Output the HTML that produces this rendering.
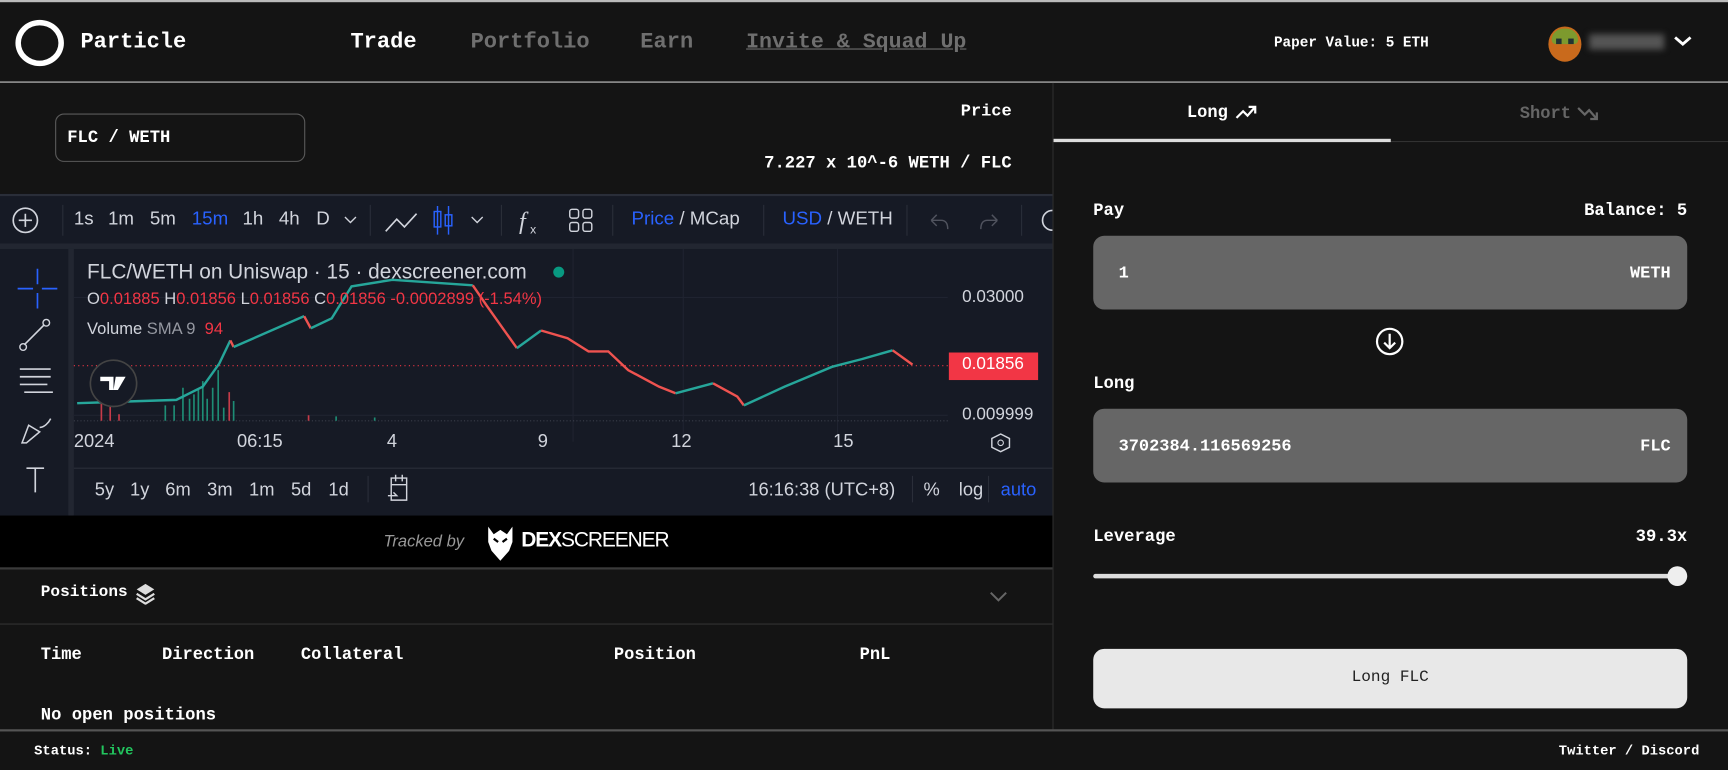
<!DOCTYPE html>
<html><head><meta charset="utf-8">
<style>
*{margin:0;padding:0;box-sizing:border-box}
html,body{width:1728px;height:770px;overflow:hidden;background:#141414}
#w{position:absolute;left:0;top:0;width:1568px;height:699px;transform:scale(1.10204,1.1016);transform-origin:0 0;background:#141414;color:#fff;font-family:"Liberation Mono",monospace}
.a{position:absolute;white-space:nowrap}
.m{font-family:"Liberation Mono",monospace;font-weight:bold}
.s{font-family:"Liberation Sans",sans-serif}
.tb{color:#d1d4dc;font-size:17px;top:189px}
.bb{color:#d1d4dc;font-size:16.6px;top:435px}
</style></head><body><div id="w">
<div class="a" style="left:0;top:0;width:1568px;height:2px;background:#bbb"></div>
<!-- header -->
<div class="a" style="left:14px;top:18px;width:44px;height:42px;border:5px solid #fff;border-radius:50%"></div>
<div class="a m" style="left:73px;top:27px;font-size:20px">Particle</div>
<div class="a m" style="left:318px;top:27px;font-size:20px;color:#fff">Trade</div>
<div class="a m" style="left:427px;top:27px;font-size:20px;color:#6f6f6f">Portfolio</div>
<div class="a m" style="left:581px;top:27px;font-size:20px;color:#6f6f6f">Earn</div>
<div class="a m" style="left:677px;top:27px;font-size:19.6px;color:#6f6f6f;text-decoration:underline">Invite &amp; Squad Up</div>
<div class="a m" style="left:1156px;top:31px;font-size:13px">Paper Value: 5 ETH</div>
<div class="a" style="left:1405px;top:24px;width:30px;height:32px;border-radius:50%;background:#c96a1c;overflow:hidden"><div style="position:absolute;left:3px;top:2px;width:24px;height:14px;background:#7d9a2e;border-radius:12px 12px 4px 4px"></div><div style="position:absolute;left:7px;top:11px;width:5px;height:5px;background:#233"></div><div style="position:absolute;left:18px;top:11px;width:5px;height:5px;background:#233"></div></div>
<div class="a" style="left:1442px;top:31px;width:68px;height:14px;background:#555;filter:blur(3px)"></div>
<svg class="a" style="left:1518px;top:31px" width="18" height="12"><path d="M2 3l7 6 7-6" stroke="#fff" stroke-width="2.6" fill="none"/></svg>
<div class="a" style="left:0;top:74px;width:1568px;height:1px;background:#ccc"></div>
<div class="a" style="left:955px;top:75px;width:1px;height:588px;background:#2e2e2e"></div>
<!-- pair -->
<div class="a" style="left:50px;top:103px;width:227px;height:44px;border:1.5px solid #5a5a5a;border-radius:8px"></div>
<div class="a m" style="left:61px;top:116px;font-size:15.6px">FLC / WETH</div>
<div class="a m" style="right:650px;top:92px;font-size:15.4px">Price</div>
<div class="a m" style="right:650px;top:139px;font-size:15.6px">7.227 x 10^-6 WETH / FLC</div>
<!-- chart -->
<div class="a" style="left:0;top:176px;width:955px;height:292px;background:#161a25;overflow:hidden">
 <div class="a" style="left:0;top:0;width:955px;height:2px;background:#2a2e39"></div>
 <div class="a" style="left:0;top:45px;width:955px;height:5px;background:#222631"></div>
 <div class="a" style="left:62px;top:50px;width:5px;height:242px;background:#222631"></div>
</div>
<svg class="a" style="left:0;top:176px" width="955" height="292">
 <circle cx="23" cy="24" r="11" stroke="#d1d4dc" stroke-width="1.5" fill="none"/><path d="M17 24h12M23 18v12" stroke="#d1d4dc" stroke-width="1.5"/>
 <path d="M57 10v28M336 10v28M455 10v28M556 10v28M693 10v28M823 10v28M927 10v28" stroke="#2a2e39"/>
 <path d="M350 34l10-11 7 7 11-12" stroke="#d1d4dc" stroke-width="1.5" fill="none"/>
 <path d="M397 11v26M407 11v26" stroke="#2962ff" stroke-width="1.3"/><rect x="394" y="16" width="6" height="14" fill="none" stroke="#2962ff" stroke-width="1.3"/><rect x="404" y="19" width="6" height="10" fill="none" stroke="#2962ff" stroke-width="1.3"/>
 <path d="M313 21l5 5 5-5M428 21l5 5 5-5" stroke="#d1d4dc" stroke-width="1.2" fill="none"/>
 <text x="471" y="32" fill="#d1d4dc" font-size="22" font-family="Liberation Serif" font-style="italic">f</text><text x="481" y="36" fill="#d1d4dc" font-size="11" font-family="Liberation Sans">x</text>
 <g fill="none" stroke="#d1d4dc" stroke-width="1.3"><rect x="517" y="14" width="8" height="8" rx="2"/><rect x="529" y="14" width="8" height="8" rx="2"/><rect x="517" y="26" width="8" height="8" rx="2"/><rect x="529" y="26" width="8" height="8" rx="2"/></g>
 <path d="M845 24l5-5M845 24l5 5M845 24h9c4 0 6 3 6 8M905 24l-5-5M905 24l-5 5M905 24h-9c-4 0-6 3-6 8" stroke="#50535e" stroke-width="1.3" fill="none"/>
 <circle cx="955" cy="24" r="9" stroke="#d1d4dc" stroke-width="1.5" fill="none"/>
 <path d="M34 68v14M34 90v14M16 86h14M38 86h14" stroke="#2962ff" stroke-width="1.5"/>
 <path d="M22 137l18-18" stroke="#d1d4dc" stroke-width="1.5"/><circle cx="21" cy="139" r="3" fill="none" stroke="#d1d4dc" stroke-width="1.3"/><circle cx="42" cy="117" r="3" fill="none" stroke="#d1d4dc" stroke-width="1.3"/>
 <path d="M18 159h28M18 166h28M18 173h25M22 180h26" stroke="#d1d4dc" stroke-width="1.5"/>
 <path d="M20 226l6-16 10 6-12 10zM36 212c4 0 8-4 10-8" stroke="#d1d4dc" stroke-width="1.4" fill="none"/>
 <path d="M24 249h16M32 249v22" stroke="#d1d4dc" stroke-width="1.5"/>
 <path d="M67 94H860M67 201H860M620 50v175M760 50v175M520 50v175" stroke="#1f2330" stroke-width="1"/>
 <path d="M67 156H860" stroke="#f23645" stroke-width="1" stroke-dasharray="1 3"/>
 <path d="M67 206H860" stroke="#3a3e4a" stroke-dasharray="1 2"/>
 <g stroke="#1e8d75" stroke-width="1.5"><path d="M150 206v-14M158 206v-14M166 206v-30M172 206v-20M176 206v-24M180 206v-28M184 206v-36M188 206v-20M193 206v-30M198 206v-46M203 206v-12M212 206v-18M305 206v-4M340 206v-3"/></g>
 <g stroke="#c73b49" stroke-width="1.5"><path d="M92 206v-18M100 206v-14M208 206v-26M108 206v-6M280 206v-5"/></g>
 <polyline fill="none" stroke="#26a69a" stroke-width="2.2" points="70,190 160,187 184,175 199,154 209,133"/>
 <polyline fill="none" stroke="#ef5350" stroke-width="2.2" points="209,133 212,139"/>
 <polyline fill="none" stroke="#26a69a" stroke-width="2.2" points="212,139 276,111"/>
 <polyline fill="none" stroke="#ef5350" stroke-width="2.2" points="276,111 282,122"/>
 <polyline fill="none" stroke="#26a69a" stroke-width="2.2" points="282,122 301,113 319,84 356,78 429,83"/>
 <polyline fill="none" stroke="#ef5350" stroke-width="2.2" points="429,83 442,102 469,140"/>
 <polyline fill="none" stroke="#26a69a" stroke-width="2.2" points="469,140 491,124"/>
 <polyline fill="none" stroke="#ef5350" stroke-width="2.2" points="491,124 515,131 534,143 552,143 570,160 598,175 613,181"/>
 <polyline fill="none" stroke="#26a69a" stroke-width="2.2" points="613,181 647,172"/>
 <polyline fill="none" stroke="#ef5350" stroke-width="2.2" points="647,172 669,184 675,192"/>
 <polyline fill="none" stroke="#26a69a" stroke-width="2.2" points="675,192 712,175 755,157 782,150 810,142"/>
 <polyline fill="none" stroke="#ef5350" stroke-width="2.2" points="810,142 828,155"/>
 <circle cx="507" cy="71" r="5" fill="#089981"/>
 <circle cx="103" cy="172" r="21" fill="#161a25" stroke="#444" stroke-width="1.5"/>
 <path d="M91 166h12v12h-4v-8h-8zM105 166h9l-7 12h-4z" fill="#fff"/>
 <rect x="861" y="144" width="81" height="25" fill="#f23645"/>
 <path d="M67 249H955" stroke="#2a2e39"/>
 <path d="M355 258v20h14v-20zM355 264h14M359 255v6M365 255v6M352 274h8l-3-3" stroke="#d1d4dc" stroke-width="1.3" fill="none"/>
 <path d="M334 256v24M828 256v24M897 256v24" stroke="#2a2e39"/>
 <path d="M908 218l8 4v8l-8 4-8-4v-8z" stroke="#d1d4dc" stroke-width="1.3" fill="none"/><circle cx="908" cy="226" r="2.5" stroke="#d1d4dc" fill="none"/>
</svg>
<div class="a s tb" style="left:67px">1s</div><div class="a s tb" style="left:98px">1m</div><div class="a s tb" style="left:136px">5m</div><div class="a s tb" style="left:174px;color:#2962ff">15m</div><div class="a s tb" style="left:220px">1h</div><div class="a s tb" style="left:253px">4h</div><div class="a s tb" style="left:287px">D</div>
<div class="a s tb" style="left:573px"><span style="color:#2962ff">Price</span> / MCap</div>
<div class="a s tb" style="left:710px"><span style="color:#2962ff">USD</span> / WETH</div>
<div class="a s" style="left:79px;top:237px;font-size:18.9px;color:#d1d4dc">FLC/WETH on Uniswap · 15 · dexscreener.com</div>
<div class="a s" style="left:79px;top:263px;font-size:15px;color:#f23645"><span style="color:#d1d4dc">O</span>0.01885 <span style="color:#d1d4dc">H</span>0.01856 <span style="color:#d1d4dc">L</span>0.01856 <span style="color:#d1d4dc">C</span>0.01856 -0.0002899 (-1.54%)</div>
<div class="a s" style="left:79px;top:290px;font-size:15px;color:#d1d4dc">Volume <span style="color:#9598a1">SMA 9</span> <span style="color:#f23645">&nbsp;94</span></div>
<div class="a s" style="left:873px;top:261px;font-size:15.5px;color:#d1d4dc">0.03000</div>
<div class="a s" style="left:873px;top:368px;font-size:15.5px;color:#d1d4dc">0.009999</div>
<div class="a s" style="left:873px;top:322px;font-size:15.5px;color:#fff">0.01856</div>
<div class="a s" style="left:67px;top:391px;font-size:16.6px;color:#d1d4dc">2024</div>
<div class="a s" style="left:215px;top:391px;font-size:16.6px;color:#d1d4dc">06:15</div>
<div class="a s" style="left:351px;top:391px;font-size:16.6px;color:#d1d4dc">4</div>
<div class="a s" style="left:488px;top:391px;font-size:16.6px;color:#d1d4dc">9</div>
<div class="a s" style="left:609px;top:391px;font-size:16.6px;color:#d1d4dc">12</div>
<div class="a s" style="left:756px;top:391px;font-size:16.6px;color:#d1d4dc">15</div>
<div class="a s bb" style="left:86px">5y</div><div class="a s bb" style="left:118px">1y</div><div class="a s bb" style="left:150px">6m</div><div class="a s bb" style="left:188px">3m</div><div class="a s bb" style="left:226px">1m</div><div class="a s bb" style="left:264px">5d</div><div class="a s bb" style="left:298px">1d</div>
<div class="a s bb" style="left:679px">16:16:38 (UTC+8)</div><div class="a s bb" style="left:838px">%</div><div class="a s bb" style="left:870px">log</div><div class="a s bb" style="left:908px;color:#2962ff">auto</div>
<div class="a" style="left:0;top:468px;width:955px;height:47px;background:#000"></div>
<div class="a s" style="left:348px;top:483px;font-size:15px;font-style:italic;color:#999">Tracked by</div>
<svg class="a" style="left:440px;top:476px" width="28" height="34"><path d="M3 2l5 7 6-4 6 4 5-7v14l-3 8-8 9-8-9-3-8z" fill="#fff"/><path d="M8 13l4 3M20 13l-4 3" stroke="#000" stroke-width="2"/></svg>
<div class="a s" style="left:473px;top:480px;font-size:19px;font-weight:bold;color:#fff;letter-spacing:-1px">DEX<span style="font-weight:normal">SCREENER</span></div>
<div class="a" style="left:0;top:515px;width:955px;height:2px;background:#3a3a3a"></div>
<!-- positions -->
<div class="a m" style="left:37px;top:530px;font-size:14.6px">Positions</div>
<svg class="a" style="left:122px;top:529px" width="20" height="20"><path d="M10 1l8 5-8 5-8-5z" fill="#ddd"/><path d="M2 10l8 5 8-5M2 14l8 5 8-5" stroke="#ddd" stroke-width="2" fill="none"/></svg>
<svg class="a" style="left:897px;top:535px" width="18" height="12"><path d="M2 3l7 7 7-7" stroke="#666" stroke-width="1.8" fill="none"/></svg>
<div class="a" style="left:0;top:566px;width:955px;height:1px;background:#333"></div>
<div class="a m" style="left:37px;top:585px;font-size:15.5px">Time</div>
<div class="a m" style="left:147px;top:585px;font-size:15.5px">Direction</div>
<div class="a m" style="left:273px;top:585px;font-size:15.5px">Collateral</div>
<div class="a m" style="left:557px;top:585px;font-size:15.5px">Position</div>
<div class="a m" style="left:780px;top:585px;font-size:15.5px">PnL</div>
<div class="a m" style="left:37px;top:640px;font-size:15.6px">No open positions</div>
<!-- footer -->
<div class="a" style="left:0;top:662px;width:1568px;height:2px;background:#555"></div>
<div class="a m" style="left:31px;top:675px;font-size:12.5px">Status: <span style="color:#22c55e">Live</span></div>
<div class="a m" style="right:26px;top:675px;font-size:12.5px">Twitter / Discord</div>
<!-- right panel -->
<div class="a m" style="left:1077px;top:93px;font-size:15.5px">Long</div>
<svg class="a" style="left:1121px;top:95px" width="20" height="14"><path d="M1 12l6-6 4 4 7-8M12 2h6v6" stroke="#fff" stroke-width="2" fill="none"/></svg>
<div class="a m" style="left:1379px;top:94px;font-size:15.5px;color:#666">Short</div>
<svg class="a" style="left:1431px;top:96px" width="20" height="14"><path d="M1 2l6 6 4-4 7 8M12 12h6V6" stroke="#666" stroke-width="2" fill="none"/></svg>
<div class="a" style="left:956px;top:128px;width:612px;height:1px;background:#333"></div>
<div class="a" style="left:956px;top:126px;width:306px;height:3px;background:#ddd"></div>
<div class="a m" style="left:992px;top:182px;font-size:15.6px">Pay</div>
<div class="a m" style="right:37px;top:182px;font-size:15.6px">Balance: 5</div>
<div class="a" style="left:992px;top:214px;width:539px;height:67px;background:#666;border-radius:10px"></div>
<div class="a m" style="left:1015px;top:239px;font-size:15.4px">1</div>
<div class="a m" style="right:52px;top:239px;font-size:15.4px">WETH</div>
<svg class="a" style="left:1247px;top:296px" width="28" height="28"><circle cx="14" cy="14" r="11.5" stroke="#fff" stroke-width="2" fill="none"/><path d="M14 7v13M9 15l5 5 5-5" stroke="#fff" stroke-width="2" fill="none"/></svg>
<div class="a m" style="left:992px;top:339px;font-size:15.6px">Long</div>
<div class="a" style="left:992px;top:371px;width:539px;height:67px;background:#666;border-radius:10px"></div>
<div class="a m" style="left:1015px;top:396px;font-size:15.4px">3702384.116569256</div>
<div class="a m" style="right:52px;top:396px;font-size:15.4px">FLC</div>
<div class="a m" style="left:992px;top:478px;font-size:15.6px">Leverage</div>
<div class="a m" style="right:37px;top:478px;font-size:15.6px">39.3x</div>
<div class="a" style="left:992px;top:521px;width:530px;height:4px;background:#ddd;border-radius:2px"></div>
<div class="a" style="left:1513px;top:514px;width:18px;height:18px;background:#eee;border-radius:50%"></div>
<div class="a" style="left:992px;top:589px;width:539px;height:54px;background:#e8e8e8;border-radius:10px"></div>
<div class="a" style="left:992px;top:607px;width:539px;text-align:center;font-size:14.6px;color:#222">Long FLC</div>
</div></body></html>
